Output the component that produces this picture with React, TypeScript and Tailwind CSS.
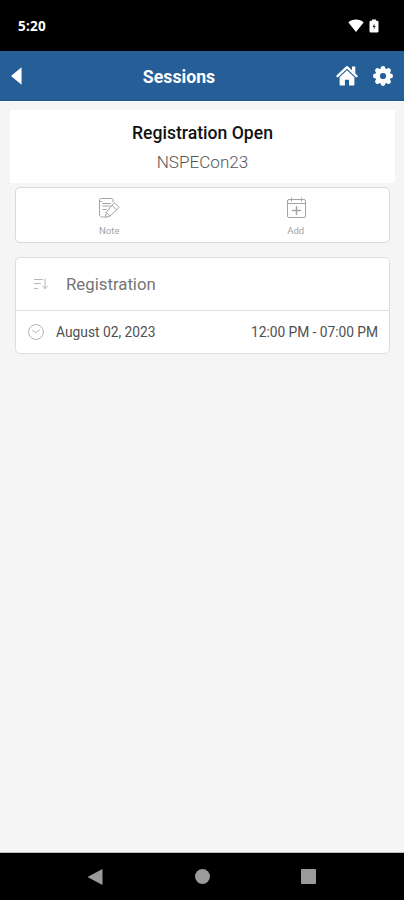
type IconProps = { className?: string };

const BackIcon = ({ className }: IconProps) => (
  <svg viewBox="0 0 12 20" className={className} fill="currentColor">
    <path d="M11.5 0.5v19L0 10z" />
  </svg>
);

const WifiIcon = ({ className }: IconProps) => (
  <svg viewBox="0 0 16 13" className={className} fill="currentColor">
    <path d="M8 13 0.4 3.4C2.3 1.6 5 0.6 8 0.6s5.7 1 7.6 2.8z" />
  </svg>
);

const BatteryIcon = ({ className }: IconProps) => (
  <svg viewBox="0 0 10 14" className={className}>
    <path
      d="M3 0.5h4v1.2h1.2a1.3 1.3 0 0 1 1.3 1.3v9.2a1.3 1.3 0 0 1-1.3 1.3H1.8a1.3 1.3 0 0 1-1.3-1.3V3a1.3 1.3 0 0 1 1.3-1.3H3z"
      fill="currentColor"
    />
    <path d="M5.500 4.500 3.500 8h1.300v2.500L6.700 7H5.500z" fill="#333" />
  </svg>
);

const HomeIcon = ({ className }: IconProps) => (
  <svg viewBox="0 0 22 21" className={className} fill="currentColor">
    <path
      d="M1.500 11.200 11 2.200l9.500 9"
      fill="none"
      stroke="currentColor"
      strokeWidth="2.3"
      strokeLinecap="round"
      strokeLinejoin="round"
    />
    <path d="M16 1.500h3.300v7l-3.300-3z" />
    <path d="M11 5.300 3.600 12.200v7.200c0 .7.400 1.100 1.100 1.100h4.200v-5.700h4.200v5.700h4.200c.7 0 1.100-.4 1.100-1.100v-7.200z" />
  </svg>
);

const GearIcon = ({ className }: IconProps) => (
  <svg viewBox="0 0 20 20" className={className}>
    <g stroke="currentColor" strokeWidth="4.8" strokeLinecap="round">
      <path d="M10 2.400v15.200M2.400 10h15.200M4.500 4.500l11 11M15.500 4.500l-11 11" />
    </g>
    <circle cx="10" cy="10" r="7.7" fill="currentColor" />
    <circle cx="10" cy="10" r="3.1" fill="#265e98" />
  </svg>
);

const NoteIcon = ({ className }: IconProps) => (
  <svg
    viewBox="0 0 22 22"
    className={className}
    fill="none"
    stroke="currentColor"
    strokeLinecap="round"
    strokeLinejoin="round"
  >
    <path d="M6.500 20h-3l-2-1.500V3c0-.9.600-1.500 1.500-1.500h10.500c.9 0 1.500.6 1.500 1.500v2" />
    <path d="M1.500 4.500h2M4.700 6.500h7.500M4.700 9h7.500M4.700 12.500H8" />
    <path d="m7.500 20 .7-4.500 7.300-9c.5-.5 1.100-.5 1.600 0l3.400 3c.5.5.5 1.100 0 1.600L12 19z" />
    <path d="m14 8.300 4.500 4.500M8.200 15.500l3.800 3.500" />
  </svg>
);

const CalendarAddIcon = ({ className }: IconProps) => (
  <svg
    viewBox="0 0 22 22"
    className={className}
    fill="none"
    stroke="currentColor"
    strokeLinecap="round"
    strokeLinejoin="round"
  >
    <rect x="2.5" y="2.5" width="18" height="18" rx="1.5" />
    <path d="M2.500 6.500h18M6.500 1v3M16.500 1v3" />
    <path d="M7.500 13.500h8M11.500 9.500v8" strokeWidth="1.4" />
  </svg>
);

const SortIcon = ({ className }: IconProps) => (
  <svg
    viewBox="0 0 16 14"
    className={className}
    fill="none"
    stroke="currentColor"
    strokeLinecap="round"
    strokeLinejoin="round"
  >
    <path d="M1.500 2.500h8M1.500 6.500h6M1.500 11.500h3M12 2v9.500M9.700 9.200l2.300 2.300 2.300-2.300" />
  </svg>
);

const ClockIcon = ({ className }: IconProps) => (
  <svg
    viewBox="0 0 18 18"
    className={className}
    fill="none"
    stroke="currentColor"
    strokeLinecap="round"
    strokeLinejoin="round"
  >
    <circle cx="9" cy="9" r="7.5" />
    <path d="m5.500 7.500 3 2.300 4-2.800" />
  </svg>
);

const actions = [
  { label: "Note", Icon: NoteIcon },
  { label: "Add", Icon: CalendarAddIcon },
];

export default function App() {
  return (
    <div className="flex h-screen w-full flex-col bg-[#f5f5f5] font-['Roboto',sans-serif]">
      {/* Status bar */}
      <div className="flex h-[51px] shrink-0 items-center justify-between bg-black pr-[25px] pl-[18px] text-white">
        <span className="font-['Open_Sans',sans-serif] text-[13.5px] leading-4 font-bold tracking-[0.2px]">
          5:20
        </span>
        <div className="flex items-center gap-[5px]">
          <WifiIcon className="h-[13px] w-4" />
          <BatteryIcon className="h-3.5 w-2.5" />
        </div>
      </div>

      {/* Header */}
      <header className="flex h-[50px] shrink-0 items-center border-b border-[#1c528c] bg-[#265e98] px-[11px] text-white">
        <button aria-label="Back" className="w-[11px]">
          <BackIcon className="h-5 w-[11px]" />
        </button>
        <h1 className="flex-1 pt-0.5 text-center text-[17.7px] leading-5 font-bold">
          Sessions
        </h1>
        <div className="flex items-center gap-[15px]">
          <button aria-label="Home">
            <HomeIcon className="h-[21px] w-[22px]" />
          </button>
          <button aria-label="Settings">
            <GearIcon className="size-5" />
          </button>
        </div>
      </header>

      <main className="flex-1 border-t border-b border-t-white border-b-[#bdbdbd] pt-2">
        <section className="mr-[9px] ml-2.5 h-[73px] bg-white pt-[11px] text-center">
          <h2 className="text-[17.6px] leading-6 font-medium text-[#111]">
            Registration Open
          </h2>
          <p className="mt-[5px] text-[17.1px] leading-6 font-light text-[#555]">
            NSPECon23
          </p>
        </section>

        <section className="mr-3.5 ml-[15px] mt-1 flex h-14 rounded-[5px] border border-[#d9d9d9] bg-white text-[#a3a3a3]">
          {actions.map(({ label, Icon }) => (
            <button
              key={label}
              className="flex flex-1 flex-col items-center pt-[9px]"
            >
              <Icon className="size-[22px]" />
              <span className="mt-1.5 text-[9.5px] leading-3">{label}</span>
            </button>
          ))}
        </section>

        <section className="mr-3.5 ml-[15px] mt-3.5 rounded-[5px] border border-[#dedede] bg-white">
          <div className="flex h-[53px] items-center border-b border-[#dedede] pl-[17px]">
            <SortIcon className="h-3.5 w-4 text-[#b5b5b5]" />
            <span className="ml-[17px] pt-0.5 text-[16.8px] text-[#757575]">
              Registration
            </span>
          </div>
          <div className="flex h-[42px] items-center px-[11px] text-[13.8px] text-[#505050]">
            <ClockIcon className="size-[18px] text-[#b5b5b5]" />
            <span className="ml-[11px] pt-px">August 02, 2023</span>
            <span className="ml-auto pt-px tracking-[-0.04px]">
              12:00 PM - 07:00 PM
            </span>
          </div>
        </section>
      </main>

      {/* Android navigation */}
      <nav className="flex h-[47px] shrink-0 items-center justify-between bg-black pr-[88px] pl-[87px] text-[#9b9b9b]">
        <svg viewBox="0 0 16 16" className="size-4" fill="currentColor">
          <path d="M15.5 0v16L0.5 8z" />
        </svg>
        <div className="size-[15px] rounded-full bg-[#9b9b9b]" />
        <div className="size-[15px] rounded-[1px] bg-[#9b9b9b]" />
      </nav>
    </div>
  );
}
